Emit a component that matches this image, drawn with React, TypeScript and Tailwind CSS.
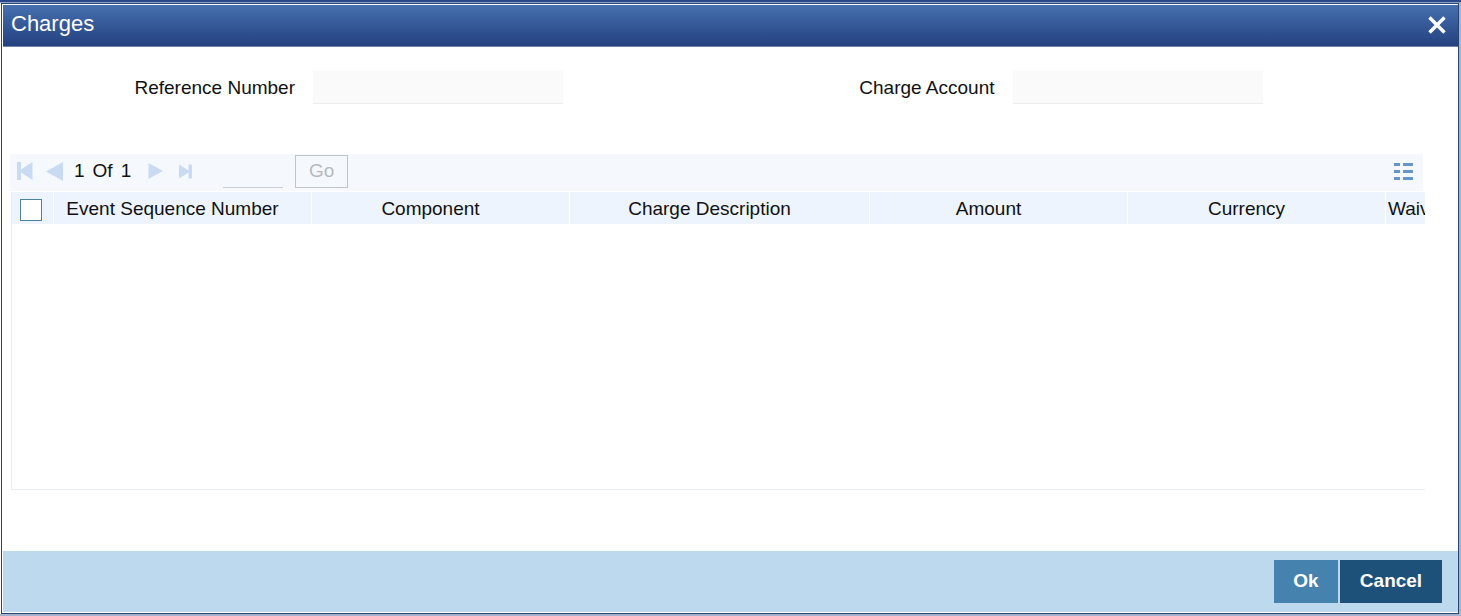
import React from "react";

const columns = [
  { label: "Event Sequence Number", width: "w-[258px]" },
  { label: "Component", width: "w-[258px]" },
  { label: "Charge Description", width: "w-[300px]" },
  { label: "Amount", width: "w-[258px]" },
  { label: "Currency", width: "w-[258px]" },
];

function Field({ id, label }: { id: string; label: string }) {
  return (
    <div className="flex min-w-0 flex-1 items-center">
      <label htmlFor={id} className="w-[292px] shrink-0 text-right leading-8">
        {label}
      </label>
      <input
        id={id}
        type="text"
        readOnly
        className="ml-[18px] h-[33px] w-[250px] min-w-0 border-b border-[#ededed] bg-[#fafafa] px-2 outline-none"
      />
    </div>
  );
}

function Pager() {
  return (
    <div className="flex h-[37px] items-center bg-[#f5f9fe] pr-[9px] pb-0.5 pl-1.5">
      <button type="button" disabled aria-label="First page" className="w-[18px]">
        <svg width="18" height="20" viewBox="0 0 18 20" fill="#c8dbf3">
          <path d="M1 0h4v7.5L16.500 0v18L5 10.500V18H1z" />
        </svg>
      </button>
      <button type="button" disabled aria-label="Previous page" className="ml-3 w-[18px]">
        <svg width="18" height="20" viewBox="0 0 18 20" fill="#c8dbf3">
          <path d="M17 0v19L0 9.500z" />
        </svg>
      </button>
      <span className="ml-2.5 flex gap-2">
        <span>1</span>
        <span>Of</span>
        <span>1</span>
      </span>
      <button type="button" disabled aria-label="Next page" className="ml-[17px] w-4">
        <svg width="16" height="18" viewBox="0 0 16 18" fill="#c8dbf3">
          <path d="M0.500 0v16l14.500-8z" />
        </svg>
      </button>
      <button type="button" disabled aria-label="Last page" className="ml-[15px] w-[14px]">
        <svg width="14" height="16" viewBox="0 0 14 16" fill="#c8dbf3">
          <path d="M0 0.500l9.500 6V0.500h3.500v14H9.500V8.500l-9.500 6z" />
        </svg>
      </button>
      <input
        type="text"
        aria-label="Go to page"
        className="ml-[30px] h-[33px] w-[60px] border-b border-[#c9ced3] bg-transparent outline-none"
      />
      <button
        type="button"
        disabled
        className="ml-3 h-[33px] w-[53px] border border-[#bfc4c9] text-[#b5b9be]"
      >
        Go
      </button>
      <button type="button" aria-label="Single record view" className="ml-auto">
        <svg width="22" height="20" viewBox="0 0 22 20" fill="#6495cd">
          <path d="M2 1h6v3H2zM11 1h10v3H11zM2 8h6v3H2zM11 8h10v3H11zM2 15h6v3H2zM11 15h10v3H11z" />
        </svg>
      </button>
    </div>
  );
}

export default function App() {
  return (
    <div className="flex min-h-screen flex-col bg-[#a5b4cd] pr-0.5 pb-0.5 font-['Liberation_Sans',Arial,sans-serif] text-[19px] text-[#111111]">
      <div className="-mr-0.5 h-[3px] border-b border-[#8ea3c6] bg-[#28468a]" />
      <main className="flex flex-1 flex-col border-l border-white">
        <div className="flex flex-1 flex-col border border-[#264573] bg-white p-px pr-0">
          <header className="flex h-[42px] items-center justify-between border-b border-[#6c86a8] bg-linear-to-b from-[#4770b0] to-[#24417f] pr-3 pl-2 text-white">
            <h1 className="pb-1 text-[22px] leading-8">Charges</h1>
            <button type="button" aria-label="Close" className="pb-0.5">
              <svg width="18" height="18" viewBox="0 0 18 18" stroke="white" strokeWidth="3.4">
                <path d="M1.5 1.5l15 15M16.5 1.5l-15 15" />
              </svg>
            </button>
          </header>

          <div className="flex pt-6 pr-14">
            <Field id="reference-number" label="Reference Number" />
            <Field id="charge-account" label="Charge Account" />
          </div>

          <section className="mt-[50px] mr-[33px] ml-2 flex flex-1 flex-col">
            <div className="-ml-px mr-0.5">
              <Pager />
            </div>
            <div className="mt-px flex-1 overflow-hidden border-b border-l border-[#e9eef3]">
              <table className="w-[1480px] table-fixed border-separate border-spacing-0">
                <thead>
                  <tr className="h-8 bg-[#edf4fe]">
                    <th className="w-[42px] border-r border-white p-0 pl-2 text-left">
                      <input
                        type="checkbox"
                        aria-label="Select all rows"
                        className="mt-1 block size-[22px] appearance-none border border-[#4c82a5] bg-white checked:bg-[#4682ae]"
                      />
                    </th>
                    {columns.map((column) => (
                      <th
                        key={column.label}
                        className={`${column.width} border-r border-white p-0 pt-0.5 pr-5 text-center leading-[30px] font-normal`}
                      >
                        {column.label}
                      </th>
                    ))}
                    <th className="p-0 pt-0.5 pl-0.5 text-left leading-[30px] font-normal">Waived</th>
                  </tr>
                </thead>
                <tbody />
              </table>
            </div>
          </section>

          <footer className="mt-[61px] flex h-[61px] items-center justify-end gap-0.5 bg-[#bcd9ed] pr-4 font-bold text-white">
            <button type="button" className="h-[43px] w-16 bg-[#4682ae]">
              Ok
            </button>
            <button type="button" className="h-[43px] w-[102px] bg-[#1d5179]">
              Cancel
            </button>
          </footer>
        </div>
      </main>
    </div>
  );
}
